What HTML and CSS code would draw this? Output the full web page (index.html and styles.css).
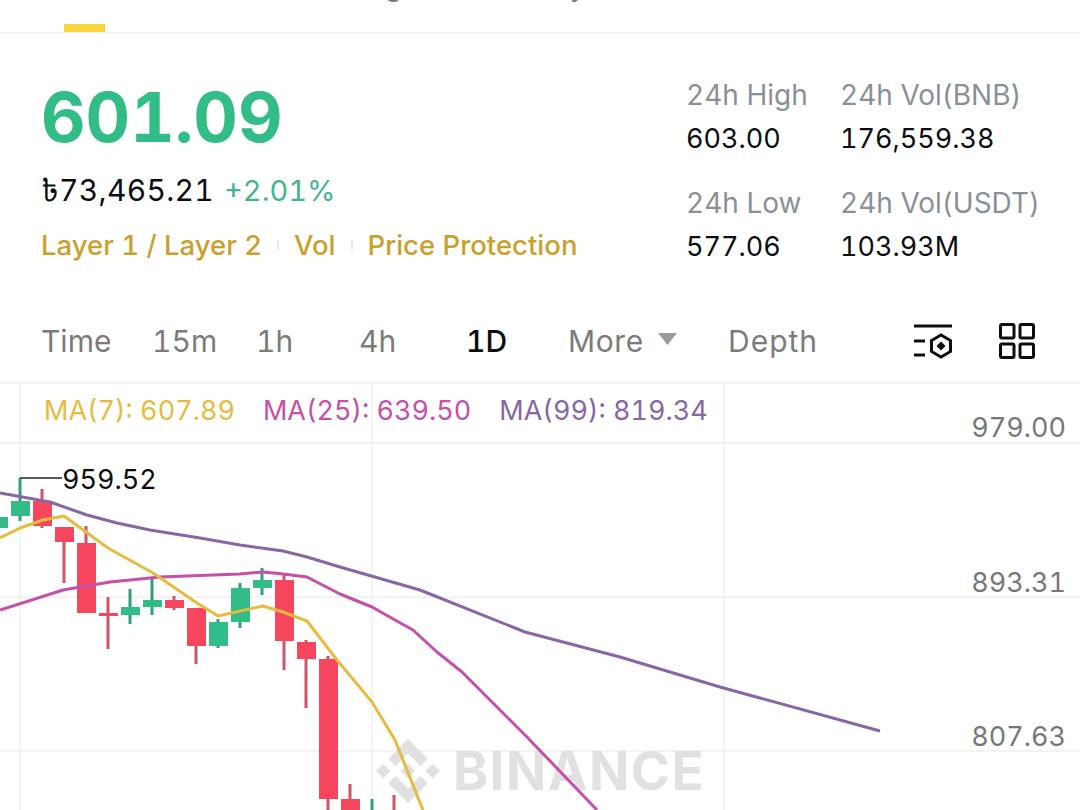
FILE: index.html
```html
<!DOCTYPE html>
<html lang="en">
<head>
<meta charset="utf-8">
<title>BNB/USDT chart</title>
<link rel="stylesheet" href="styles.css">
</head>
<body>
<div class="page">
  <header class="tabs">
    <span class="tab-clip tab-clip-g">g</span>
    <span class="tab-clip tab-clip-y">y</span>
    <i class="tab-active"></i>
  </header>

  <section class="summary">
    <div class="price-col">
      <div class="price">601.09</div>
      <div class="sub"><span class="fiat">৳73,465.21</span><span class="change">+2.01%</span></div>
      <div class="tags">
        <span>Layer 1 / Layer 2</span><i class="sep"></i>
        <span>Vol</span><i class="sep"></i>
        <span>Price Protection</span>
      </div>
    </div>
    <div class="stats">
      <div class="stat"><div class="stat-label">24h High</div><div class="stat-value">603.00</div></div>
      <div class="stat"><div class="stat-label">24h Vol(BNB)</div><div class="stat-value">176,559.38</div></div>
      <div class="stat"><div class="stat-label">24h Low</div><div class="stat-value">577.06</div></div>
      <div class="stat"><div class="stat-label">24h Vol(USDT)</div><div class="stat-value">103.93M</div></div>
    </div>
  </section>

  <nav class="toolbar">
    <span class="t-time">Time</span>
    <span class="t-15m">15m</span>
    <span class="t-1h">1h</span>
    <span class="t-4h">4h</span>
    <span class="t-1d active">1D</span>
    <span class="t-more">More<svg class="caret" width="19" height="12" viewBox="0 0 19 12"><path d="M0 0h19L9.500 12z" fill="#9b9b9b"/></svg></span>
    <span class="t-depth">Depth</span>
    <svg class="icon-indicator" width="40" height="36" viewBox="0 0 40 36" fill="none" stroke="#0b0e11" stroke-width="3">
      <path d="M1 3h38M1 18h11M1 32h11"/>
      <path d="M28 12l9.500 5.500v11L28 34l-9.500-5.500v-11z"/>
      <path d="M28 18.500l4.500 4.500-4.500 4.500-4.500-4.500z" fill="#0b0e11" stroke="none"/>
    </svg>
    <svg class="icon-grid" width="36" height="36" viewBox="0 0 36 36" fill="none" stroke="#0b0e11" stroke-width="3">
      <rect x="1.500" y="1.500" width="13.500" height="13.500" rx="1.500"/>
      <rect x="21" y="1.500" width="13.500" height="13.500" rx="1.500"/>
      <rect x="1.500" y="21" width="13.500" height="13.500" rx="1.500"/>
      <rect x="21" y="21" width="13.500" height="13.500" rx="1.500"/>
    </svg>
  </nav>

  <section class="chart">
    <svg class="chart-canvas" width="1080" height="426" viewBox="0 384 1080 426">
      <g class="grid-lines">
        <path d="M20 384V810M372 384V810M724 384V810M0 443H1080M0 597H1080M0 751H1080"/>
      </g>
      <g class="watermark">
        <svg x="376" y="739" width="64" height="64" viewBox="0 0 126.610 126.610">
          <path d="M38.730 53.200l24.590-24.580 24.600 24.600 14.300-14.310L63.320 0l-38.900 38.900zM0 63.310l14.300-14.310 14.310 14.310-14.310 14.300zM38.730 73.410l24.590 24.590 24.600-24.600 14.310 14.290-38.900 38.910-38.910-38.880v-.03zM98 63.310l14.300-14.300 14.310 14.300-14.310 14.300zM77.830 63.300L63.320 48.780 52.590 59.510l-1.240 1.230-2.540 2.540 14.510 14.500 14.510-14.470z"/>
        </svg>
        <text x="453" y="790" class="wm-text">BINANCE</text>
      </g>
      <g class="wick-green">
        <path d="M20 478V521M130 589V624M152 577V615M218 619V648M240 583V628M262 568V595M372 799V810"/>
      </g>
      <g class="wick-red">
        <path d="M42 489V528M64 527V583M86 526V613M108 597V649M174 596V610M196 608V664M284 574V670M306 640V708M328 656V810M350 784V810M394 795V810"/>
      </g>
      <g class="body-green">
        <rect x="-11" y="517" width="19" height="11"/>
        <rect x="11" y="501" width="19" height="15"/>
        <rect x="121" y="607" width="19" height="8"/>
        <rect x="143" y="600" width="19" height="7"/>
        <rect x="209" y="622" width="19" height="24"/>
        <rect x="231" y="588" width="19" height="34"/>
        <rect x="253" y="580" width="19" height="8"/>
      </g>
      <g class="body-red">
        <rect x="33" y="501" width="19" height="25"/>
        <rect x="55" y="527" width="19" height="15"/>
        <rect x="77" y="543" width="19" height="70"/>
        <rect x="99" y="613" width="19" height="3"/>
        <rect x="165" y="600" width="19" height="8"/>
        <rect x="187" y="608" width="19" height="38"/>
        <rect x="275" y="580" width="19" height="61"/>
        <rect x="297" y="642" width="19" height="17"/>
        <rect x="319" y="659" width="19" height="140"/>
        <rect x="341" y="799" width="19" height="11"/>
      </g>
      <polyline class="ma ma-99" points="0,493 50,502 87,515 117,523 150,530 200,538 240,545 283,551 307,557 340,567 420,590 525,632 620,657 720,687 880,731"/>
      <polyline class="ma ma-25" points="0,610 63,590 110,582 160,577 240,574 263,572 283,574 307,577 340,594 372,607 395,620 413,630 437,652 462,672 527,737 597,810"/>
      <polyline class="ma ma-7" points="0,538 20,528 43,520 64,516 108,548 153,573 197,603 218,616 263,606 283,612 307,621 337,660 372,702 395,740 423,810"/>
      <path class="high-line" d="M20 478H62"/>
      <text x="62" y="489" class="high-text">959.52</text>
      <text x="1066" y="437" class="axis">979.00</text>
      <text x="1066" y="592" class="axis">893.31</text>
      <text x="1066" y="746" class="axis">807.63</text>
    </svg>
    <div class="legend">
      <span class="l-7">MA(7): 607.89</span>
      <span class="l-25">MA(25): 639.50</span>
      <span class="l-99">MA(99): 819.34</span>
    </div>
  </section>
</div>
</body>
</html>
```
FILE: styles.css
```css
* { box-sizing: border-box; }
html, body { margin: 0; padding: 0; background: #fff; }
body { font-family: Inter, "Noto Sans", "Noto Sans Bengali", sans-serif; font-variant-numeric: tabular-nums; }
.page { width: 1080px; height: 810px; overflow: hidden; display: flex; flex-direction: column; }

.tabs { position: relative; height: 33px; border-bottom: 1px solid #eeeff1; overflow: hidden; flex: none; }
.tab-clip { position: absolute; top: -31px; font-size: 28px; line-height: 34px; color: #707a8a; }
.tab-clip-g { left: 385px; }
.tab-clip-y { left: 570px; }
.tab-active { position: absolute; left: 64px; top: 24px; width: 41px; height: 8px; background: #f8d33a; }

.summary { height: 273px; flex: none; padding: 0 0 0 41px; display: flex; justify-content: space-between; }
.price-col { display: flex; flex-direction: column; }
.price { margin-top: 41px; font-size: 69px; line-height: 86px; font-weight: 700; color: #32bc87; }
.sub { margin-top: 12px; display: flex; align-items: baseline; gap: 10px; font-size: 29px; line-height: 36px; }
.fiat { color: #0b0e11; font-size: 30px; letter-spacing: 0.300px; }
.change { color: #44b58c; }
.tags { margin-top: 18px; display: flex; align-items: center; font-size: 27.500px; line-height: 36px; font-weight: 500; color: #c9a12c; }
.sep { width: 2px; height: 10px; background: #e9e9e9; margin: 0 15px; }

.stats { width: 394px; padding-top: 41px; display: grid; grid-template-columns: 154px 1fr; grid-auto-rows: 108px; }
.stat-label { font-size: 28px; line-height: 43px; color: #8a9098; }
.stat-value { font-size: 27px; line-height: 43px; color: #0b0e11; }

.toolbar { height: 78px; flex: none; display: flex; align-items: center; font-size: 30px; color: #7b7b7b; border-bottom: 3px solid #f3f3f3; padding-bottom: 6px; }
.t-time { margin-left: 41px; width: 111px; }
.t-15m { width: 104px; }
.t-1h { width: 103px; }
.t-4h { width: 107px; }
.t-1d { width: 102px; }
.t-more { width: 160px; display: flex; align-items: center; gap: 14px; letter-spacing: 0.600px; }
.t-depth { width: 185px; letter-spacing: 1px; }
.active { color: #0b0e11; font-weight: 500; }
.caret { margin-top: -4px; }
.icon-grid { margin-left: 46px; }

.chart { position: relative; flex: 1; }
.chart-canvas { display: block; position: absolute; left: 0; top: 0; }
.grid-lines path { stroke: #efefef; stroke-width: 1.500; fill: none; }
.watermark { fill: #e1e1e1; }
.wm-text { font-size: 53px; font-weight: 700; letter-spacing: 1.500px; }
.wick-green path { stroke: #2f9f7e; stroke-width: 3; fill: none; }
.wick-red path { stroke: #cd5469; stroke-width: 3; fill: none; }
.body-green rect { fill: #32bc87; }
.body-red rect { fill: #f6465d; }
.ma { fill: none; stroke-width: 3; stroke-linejoin: round; }
.ma-7 { stroke: #e6bb3f; }
.ma-25 { stroke: #c64fa9; }
.ma-99 { stroke: #8766a8; }
.high-line { stroke: #222; stroke-width: 1.500; fill: none; }
.high-text { font-size: 27px; fill: #0b0e11; }
.axis { font-size: 27px; fill: #777; text-anchor: end; }

.legend { position: absolute; left: 44px; top: 7px; display: flex; gap: 28px; font-size: 27px; line-height: 40px; }
.l-7 { color: #e6bb3f; }
.l-25 { color: #c64fa9; }
.l-99 { color: #8766a8; }
```
